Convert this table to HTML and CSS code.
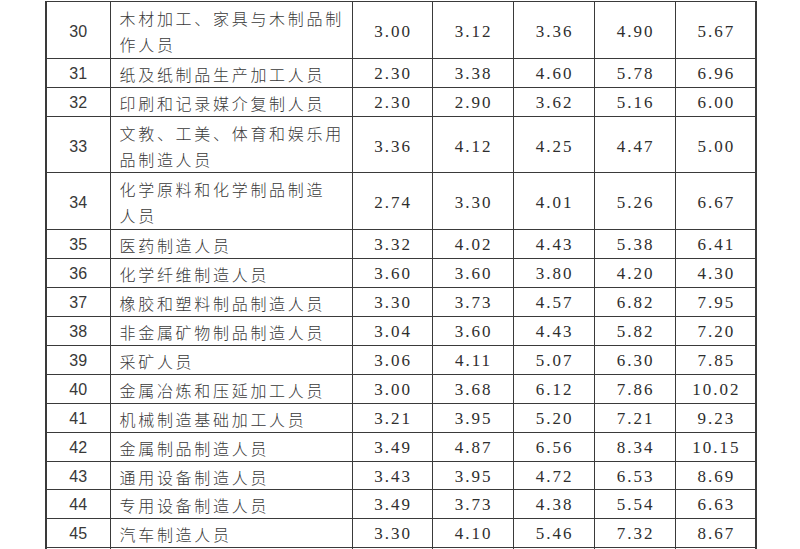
FILE: index.html
```html
<!DOCTYPE html>
<html lang="zh">
<head>
<meta charset="utf-8">
<link rel="stylesheet" href="styles.css">
</head>
<body>
<table class="grid">
  <colgroup>
    <col class="c-no"><col class="c-name"><col class="c-v1"><col class="c-v"><col class="c-v"><col class="c-v"><col class="c-v">
  </colgroup>
  <tbody>
    <tr class="dbl"><td class="no">30</td><td class="name">木材加工、家具与木制品制<br>作人员</td><td class="v">3.00</td><td class="v">3.12</td><td class="v">3.36</td><td class="v">4.90</td><td class="v">5.67</td></tr>
    <tr><td class="no">31</td><td class="name">纸及纸制品生产加工人员</td><td class="v">2.30</td><td class="v">3.38</td><td class="v">4.60</td><td class="v">5.78</td><td class="v">6.96</td></tr>
    <tr><td class="no">32</td><td class="name">印刷和记录媒介复制人员</td><td class="v">2.30</td><td class="v">2.90</td><td class="v">3.62</td><td class="v">5.16</td><td class="v">6.00</td></tr>
    <tr class="dbl"><td class="no">33</td><td class="name">文教、工美、体育和娱乐用<br>品制造人员</td><td class="v">3.36</td><td class="v">4.12</td><td class="v">4.25</td><td class="v">4.47</td><td class="v">5.00</td></tr>
    <tr class="dbl"><td class="no">34</td><td class="name">化学原料和化学制品制造<br>人员</td><td class="v">2.74</td><td class="v">3.30</td><td class="v">4.01</td><td class="v">5.26</td><td class="v">6.67</td></tr>
    <tr><td class="no">35</td><td class="name">医药制造人员</td><td class="v">3.32</td><td class="v">4.02</td><td class="v">4.43</td><td class="v">5.38</td><td class="v">6.41</td></tr>
    <tr><td class="no">36</td><td class="name">化学纤维制造人员</td><td class="v">3.60</td><td class="v">3.60</td><td class="v">3.80</td><td class="v">4.20</td><td class="v">4.30</td></tr>
    <tr><td class="no">37</td><td class="name">橡胶和塑料制品制造人员</td><td class="v">3.30</td><td class="v">3.73</td><td class="v">4.57</td><td class="v">6.82</td><td class="v">7.95</td></tr>
    <tr><td class="no">38</td><td class="name">非金属矿物制品制造人员</td><td class="v">3.04</td><td class="v">3.60</td><td class="v">4.43</td><td class="v">5.82</td><td class="v">7.20</td></tr>
    <tr><td class="no">39</td><td class="name">采矿人员</td><td class="v">3.06</td><td class="v">4.11</td><td class="v">5.07</td><td class="v">6.30</td><td class="v">7.85</td></tr>
    <tr><td class="no">40</td><td class="name">金属冶炼和压延加工人员</td><td class="v">3.00</td><td class="v">3.68</td><td class="v">6.12</td><td class="v">7.86</td><td class="v">10.02</td></tr>
    <tr><td class="no">41</td><td class="name">机械制造基础加工人员</td><td class="v">3.21</td><td class="v">3.95</td><td class="v">5.20</td><td class="v">7.21</td><td class="v">9.23</td></tr>
    <tr><td class="no">42</td><td class="name">金属制品制造人员</td><td class="v">3.49</td><td class="v">4.87</td><td class="v">6.56</td><td class="v">8.34</td><td class="v">10.15</td></tr>
    <tr><td class="no">43</td><td class="name">通用设备制造人员</td><td class="v">3.43</td><td class="v">3.95</td><td class="v">4.72</td><td class="v">6.53</td><td class="v">8.69</td></tr>
    <tr><td class="no">44</td><td class="name">专用设备制造人员</td><td class="v">3.49</td><td class="v">3.73</td><td class="v">4.38</td><td class="v">5.54</td><td class="v">6.63</td></tr>
    <tr><td class="no">45</td><td class="name">汽车制造人员</td><td class="v">3.30</td><td class="v">4.10</td><td class="v">5.46</td><td class="v">7.32</td><td class="v">8.67</td></tr>
    <tr class="tail"><td class="no"></td><td class="name"></td><td class="v"></td><td class="v"></td><td class="v"></td><td class="v"></td><td class="v"></td></tr>
  </tbody>
</table>
</body>
</html>
```

FILE: styles.css
```css
html, body {
  margin: 0;
  padding: 0;
  background: #ffffff;
}

body {
  padding-left: 45px;
  padding-top: 1px;
  overflow: hidden;
}

.grid {
  border-collapse: collapse;
  table-layout: fixed;
  width: 710px;
  color: #333333;
  border-left: 2px solid #3a3a3a;
  border-right: 2px solid #3a3a3a;
  border-top: 1px solid #3a3a3a;
}

.c-no { width: 64px; }
.c-name { width: 242px; }
.c-v1 { width: 80px; }
.c-v { width: 81px; }

.grid td {
  border: 1px solid #3a3a3a;
  padding: 3px 0 0;
  line-height: 24.9px;
  vertical-align: middle;
}

.grid .dbl td {
  padding-top: 4px;
  line-height: 25.9px;
}

.grid .no {
  text-align: center;
  font-family: "Liberation Sans", Arial, sans-serif;
  font-size: 16px;
  color: #383838;
}

.grid .name {
  text-align: left;
  padding-left: 9px;
  padding-right: 0;
  font-family: "Noto Sans CJK SC", sans-serif;
  font-size: 16px;
  letter-spacing: 2.7px;
  font-weight: 300;
  color: #3a3a3a;
  white-space: nowrap;
}

.grid .v {
  text-align: center;
  padding-left: 2px;
  font-family: "Liberation Serif", serif;
  font-size: 17px;
  letter-spacing: 2px;
  color: #2e2e2e;
}

.grid .tail td {
  height: 24.9px;
}
```
